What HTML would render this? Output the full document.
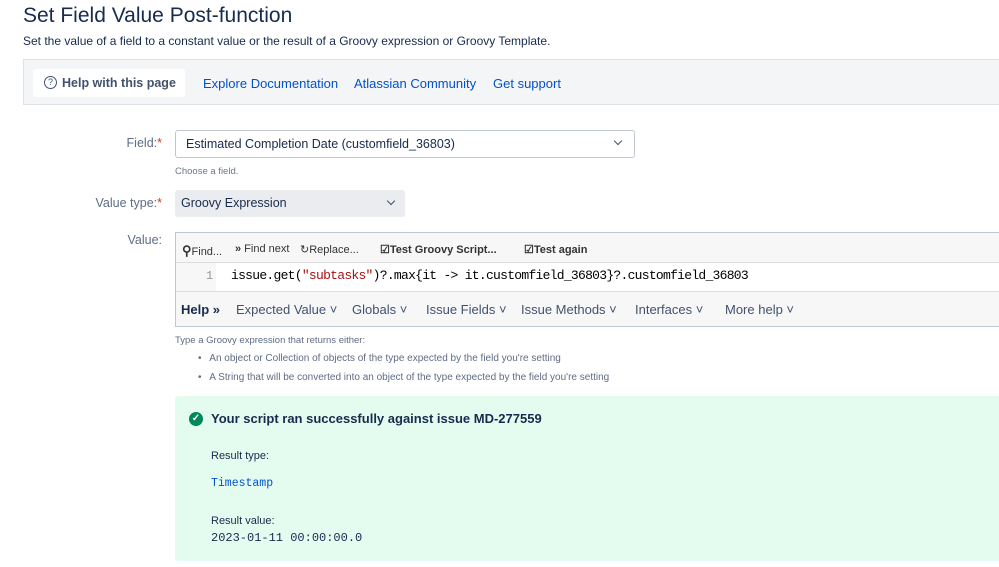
<!DOCTYPE html>
<html><head><meta charset="utf-8"><style>
*{box-sizing:border-box;margin:0;padding:0}
body{width:999px;height:567px;overflow:hidden;background:#fff;font-family:"Liberation Sans",sans-serif;color:#172b4d;position:relative}
.a{position:absolute;white-space:nowrap}
.lbl{font-size:12.5px;color:#5e6c84;text-align:right;width:150px;left:12px}
.lbl b{color:#de350b;font-weight:normal}
.mono{font-family:"Liberation Mono",monospace}
.tb{font-size:11px;color:#333;top:243px}
.hl{font-size:13px;color:#42526e;top:302px}
</style></head><body>
<div class="a" style="left:23px;top:4px;font-size:21px;color:#172b4d">Set Field Value Post-function</div>
<div class="a" style="left:23px;top:34px;font-size:12px;color:#172b4d">Set the value of a field to a constant value or the result of a Groovy expression or Groovy Template.</div>
<div class="a" style="left:23px;top:59px;width:990px;height:46px;background:#f4f5f7;border:1px solid #dfe1e6"></div>
<div class="a" style="left:33px;top:69px;width:152px;height:28px;background:#fff;border-radius:3px"></div>
<div class="a" style="left:44px;top:76px;width:13px;height:13px;border:1px solid #42526e;border-radius:50%;font-size:9px;text-align:center;line-height:11px;color:#42526e">?</div>
<div class="a" style="left:62px;top:76px;font-size:12.5px;font-weight:bold;color:#42526e">Help with this page</div>
<div class="a" style="left:203px;top:76px;font-size:13px;color:#0052cc">Explore Documentation</div>
<div class="a" style="left:354px;top:76px;font-size:13px;color:#0052cc">Atlassian Community</div>
<div class="a" style="left:493px;top:76px;font-size:13px;color:#0052cc">Get support</div>

<div class="a lbl" style="top:136px">Field:<b>*</b></div>
<div class="a" style="left:175px;top:130px;width:460px;height:28px;border:1px solid #c1c7d0;border-radius:3px;font-size:12.5px;padding:6px 10px;color:#172b4d">Estimated Completion Date (customfield_36803)</div>
<div class="a" style="left:615px;top:138px;width:6px;height:6px;border-right:1.5px solid #42526e;border-bottom:1.5px solid #42526e;transform:rotate(45deg)"></div>
<div class="a" style="left:175px;top:166px;font-size:9.5px;color:#6b778c">Choose a field.</div>
<div class="a lbl" style="top:196px">Value type:<b>*</b></div>
<div class="a" style="left:175px;top:190px;width:230px;height:27px;background:#ebecf0;border-radius:3px;font-size:12.5px;padding:6px 6px;color:#172b4d">Groovy Expression</div>
<div class="a" style="left:388px;top:198px;width:6px;height:6px;border-right:1.5px solid #42526e;border-bottom:1.5px solid #42526e;transform:rotate(45deg)"></div>
<div class="a lbl" style="top:233px">Value:</div>

<div class="a" style="left:175px;top:232px;width:830px;height:95px;border:1px solid #c1c7d0;background:#fff"></div>
<div class="a" style="left:176px;top:233px;width:830px;height:30px;background:#f7f7f7;border-bottom:1px solid #ddd"></div>
<div class="a tb" style="left:182px"><b style="font-size:13px">&#9906;</b>Find...</div>
<div class="a tb" style="left:235px"><b>»</b> Find next</div>
<div class="a tb" style="left:300px">↻Replace...</div>
<div class="a tb" style="left:380px;font-weight:bold">☑Test Groovy Script...</div>
<div class="a tb" style="left:524px;font-weight:bold">☑Test again</div>
<div class="a" style="left:176px;top:263px;width:40px;height:28px;background:#f7f7f7"></div>
<div class="a mono" style="left:206px;top:269px;font-size:12px;color:#999">1</div>
<div class="a mono" style="left:231px;top:268px;font-size:13px;color:#000;letter-spacing:-0.72px">issue.get(<span style="color:#a11">"subtasks"</span>)?.max{it -> it.customfield_36803}?.customfield_36803</div>
<div class="a" style="left:176px;top:291px;width:830px;height:35px;background:#f7f7f7;border-top:1px solid #ddd"></div>
<div class="a hl" style="left:181px;font-weight:bold;color:#172b4d">Help »</div>
<div class="a hl" style="left:236px">Expected Value ˅</div>
<div class="a hl" style="left:352px">Globals ˅</div>
<div class="a hl" style="left:426px">Issue Fields ˅</div>
<div class="a hl" style="left:521px">Issue Methods ˅</div>
<div class="a hl" style="left:635px">Interfaces ˅</div>
<div class="a hl" style="left:725px">More help ˅</div>

<div class="a" style="left:175px;top:335px;font-size:9.5px;color:#5e6c84">Type a Groovy expression that returns either:</div>
<div class="a" style="left:198px;top:353px;font-size:10px;color:#5e6c84">•&nbsp;&nbsp; An object or Collection of objects of the type expected by the field you're setting</div>
<div class="a" style="left:198px;top:372px;font-size:10px;color:#5e6c84">•&nbsp;&nbsp; A String that will be converted into an object of the type expected by the field you're setting</div>

<div class="a" style="left:175px;top:396px;width:830px;height:165px;background:#e3fcef;border-radius:3px"></div>
<div class="a" style="left:189px;top:412px;width:14px;height:14px;border-radius:50%;background:#00875a;color:#fff;font-size:10px;text-align:center;line-height:14px;font-weight:bold">✓</div>
<div class="a" style="left:211px;top:411px;font-size:13px;font-weight:bold;color:#172b4d">Your script ran successfully against issue MD-277559</div>
<div class="a" style="left:211px;top:450px;font-size:11px;color:#172b4d">Result type:</div>
<div class="a mono" style="left:211px;top:477px;font-size:11.5px;color:#0052cc">Timestamp</div>
<div class="a" style="left:211px;top:515px;font-size:11px;color:#172b4d">Result value:</div>
<div class="a mono" style="left:211px;top:531px;font-size:12px;color:#172b4d">2023-01-11 00:00:00.0</div>
</body></html>
